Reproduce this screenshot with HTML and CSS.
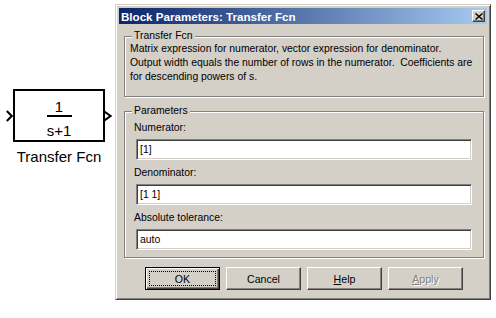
FILE: index.html
```html
<!DOCTYPE html>
<html>
<head>
<meta charset="utf-8">
<link rel="stylesheet" href="styles.css">
</head>
<body>
<div class="canvas">
  <div class="node">
    <div class="node-row">
      <svg class="port-in" width="7" height="12" viewBox="0 0 7 12"><polyline points="0.8,1 5.8,6 0.8,11" fill="none" stroke="#000" stroke-width="2"/></svg>
      <div class="block">
        <div class="num">1</div>
        <div class="bar"></div>
        <div class="den">s+1</div>
      </div>
      <svg class="port-out" width="8" height="12" viewBox="0 0 8 12"><polygon points="0,1.2 6.5,6 0,10.8" fill="#fff" stroke="#000" stroke-width="2"/></svg>
    </div>
    <div class="node-label">Transfer Fcn</div>
  </div>
</div>
<div class="dialog">
  <div class="titlebar">
    <span class="title">Block Parameters: Transfer Fcn</span>
    <span class="close"><svg width="8" height="7" viewBox="0 0 8 7"><path d="M0.5 0.5 L7.5 6.5 M7.5 0.5 L0.5 6.5" stroke="#000" stroke-width="1.4" fill="none"/></svg></span>
  </div>
  <fieldset class="group desc">
    <legend>Transfer Fcn</legend>
    <div class="desc-text">Matrix expression for numerator, vector expression for denominator.<br>Output width equals the number of rows in the numerator.&nbsp; Coefficients are<br>for descending powers of s.</div>
  </fieldset>
  <fieldset class="group params">
    <legend>Parameters</legend>
    <div class="field-label">Numerator:</div>
    <div class="input">[1]</div>
    <div class="field-label">Denominator:</div>
    <div class="input">[1 1]</div>
    <div class="field-label">Absolute tolerance:</div>
    <div class="input">auto</div>
  </fieldset>
  <div class="buttons">
    <div class="btn default"><span class="focus">OK</span></div>
    <div class="btn">Cancel</div>
    <div class="btn"><span><u>H</u>elp</span></div>
    <div class="btn disabled"><span><u>A</u>pply</span></div>
  </div>
</div>
</body>
</html>
```
FILE: styles.css
```css
html, body {
  margin: 0;
  padding: 0;
}
body {
  width: 496px;
  height: 318px;
  background: #fff;
  display: flex;
  align-items: flex-start;
  overflow: hidden;
  font-family: "Liberation Sans", Arial, sans-serif;
}
.canvas {
  width: 115px;
  flex: none;
  padding-top: 89px;
  padding-left: 6px;
  box-sizing: border-box;
}
.node {
  display: flex;
  flex-direction: column;
  align-items: center;
  width: 106px;
}
.node-row {
  display: flex;
  align-items: center;
}
.port-in, .port-out {
  display: block;
  flex: none;
}
.port-out {
  margin-left: -1px;
}
.block {
  width: 92px;
  height: 53px;
  box-sizing: border-box;
  border: 2px solid #000;
  background: #fff;
  display: flex;
  flex-direction: column;
  align-items: center;
  padding-top: 8px;
  font-size: 15px;
  color: #000;
}
.num, .den {
  line-height: 15px;
}
.bar {
  width: 25px;
  height: 2px;
  background: #000;
  margin-top: 1px;
}
.den {
  margin-top: 6px;
}
.node-label {
  font-size: 15px;
  line-height: 17px;
  margin-top: 6px;
  color: #000;
}

.dialog {
  flex: none;
  margin-top: 4px;
  width: 376px;
  height: 296px;
  box-sizing: border-box;
  background: #D4D0C8;
  border: 1px solid;
  border-color: #D4D0C8 #404040 #404040 #D4D0C8;
  box-shadow: inset 1px 1px #fff, inset -1px -1px #808080;
  padding: 3px;
  display: flex;
  flex-direction: column;
  font-size: 10.4px;
  color: #000;
}
.titlebar {
  height: 16px;
  flex: none;
  display: flex;
  align-items: center;
  justify-content: space-between;
  background: linear-gradient(to right, #0A246A, #A6CAF0);
  padding-left: 2px;
  padding-right: 2px;
}
.title {
  color: #fff;
  font-weight: bold;
  font-size: 11.6px;
  white-space: nowrap;
}
.close {
  width: 13px;
  height: 12px;
  box-sizing: border-box;
  background: #D4D0C8;
  border: 1px solid;
  border-color: #fff #404040 #404040 #fff;
  box-shadow: inset -1px -1px #808080;
  display: flex;
  align-items: center;
  justify-content: center;
}
.close svg {
  display: block;
}
.group {
  margin: 0 3px 0 5px;
  border: 1px solid #808080;
  box-shadow: inset 1px 1px #fff, 1px 1px #fff;
  min-width: 0;
}
.group legend {
  line-height: 12px;
  padding: 0 2px;
  background: #D4D0C8;
}
.desc {
  margin-top: 6px;
  padding: 0 5px 12px 5px;
}
.desc legend {
  margin-left: 2px;
}
.desc-text {
  line-height: 14px;
  white-space: nowrap;
}
.params {
  margin-top: 8px;
  padding: 4px 11px 7px 11px;
}
.params legend {
  margin-left: -4px;
}
.field-label {
  line-height: 14px;
  margin-left: -2px;
  margin-bottom: 4px;
}
.input {
  height: 21px;
  box-sizing: border-box;
  background: #fff;
  border: 1px solid;
  border-color: #808080 #fff #fff #808080;
  box-shadow: inset 1px 1px #404040, inset -1px -1px #D4D0C8;
  display: flex;
  align-items: center;
  padding: 0 3px;
  margin-bottom: 6px;
}
.input:last-child {
  margin-bottom: 0;
}
.buttons {
  display: flex;
  gap: 6px;
  margin-top: 9px;
  padding-left: 26px;
}
.btn {
  width: 75px;
  height: 23px;
  box-sizing: border-box;
  background: #D4D0C8;
  border: 1px solid;
  border-color: #fff #404040 #404040 #fff;
  box-shadow: inset -1px -1px #808080;
  display: flex;
  align-items: center;
  justify-content: center;
  font-size: 10.6px;
}
.btn.default {
  border: 1px solid #000;
  box-shadow: inset 1px 1px #fff, inset -1px -1px #404040, inset -2px -2px #808080;
  padding: 3px;
}
.focus {
  flex: 1;
  align-self: stretch;
  border: 1px dotted #000;
  display: flex;
  align-items: center;
  justify-content: center;
}
.btn.disabled {
  color: #808080;
  text-shadow: 1px 1px #fff;
}
```
